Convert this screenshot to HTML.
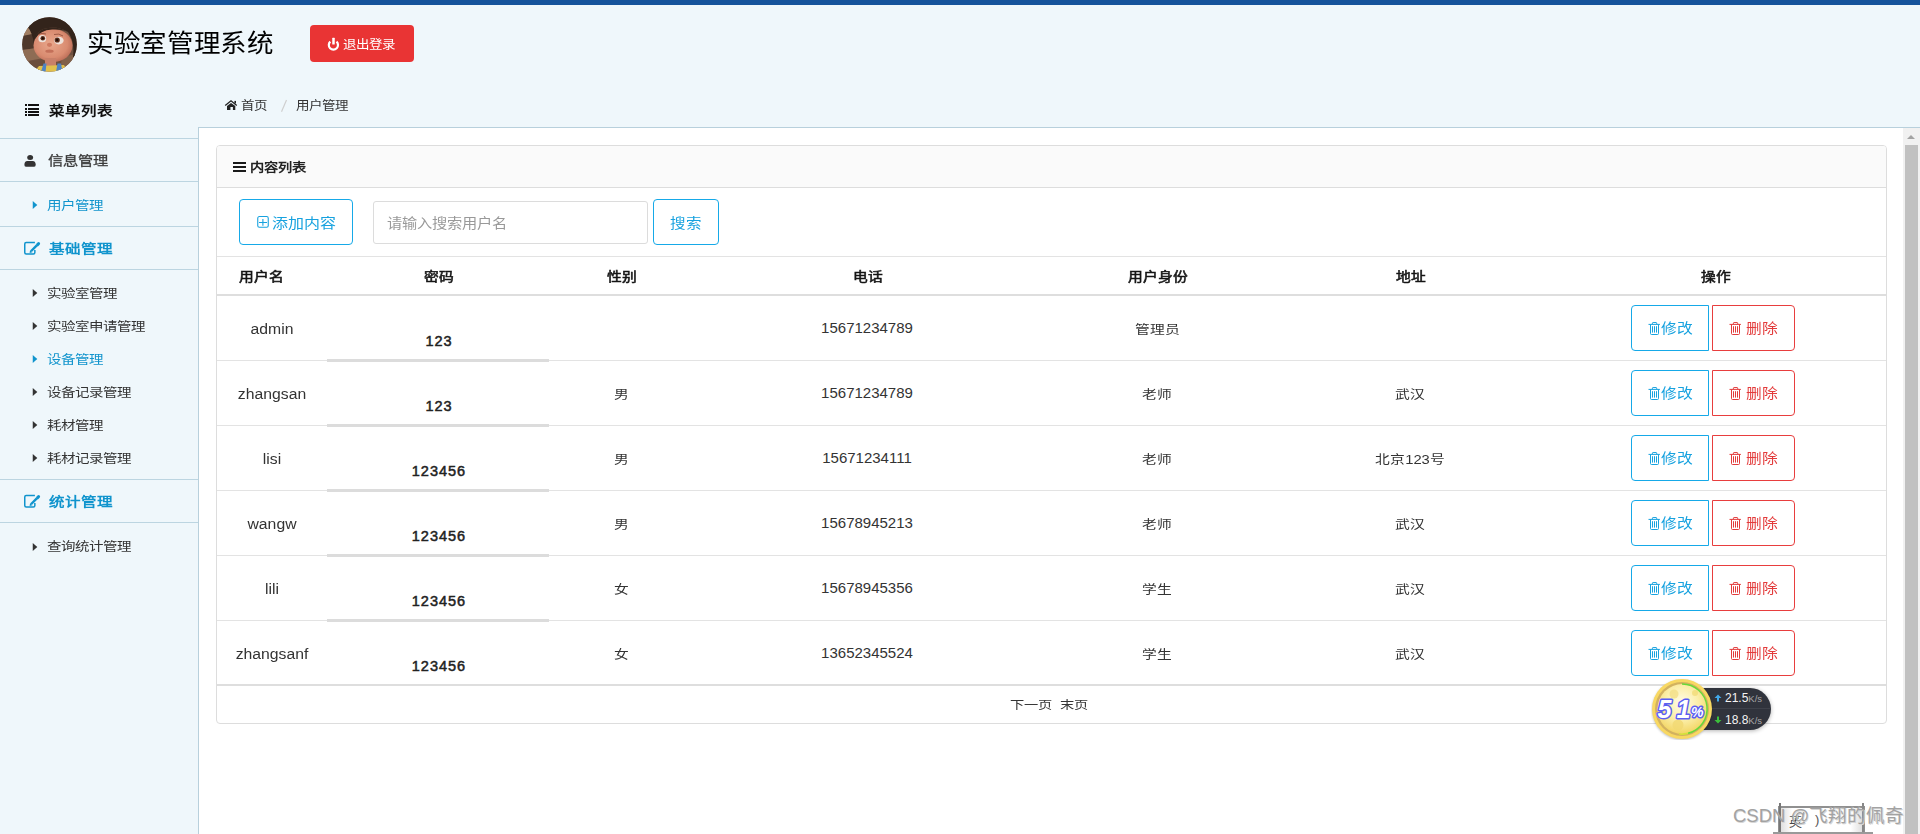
<!DOCTYPE html>
<html lang="zh-CN">
<head>
<meta charset="utf-8">
<style>
*{margin:0;padding:0;box-sizing:border-box;}
html,body{width:1920px;height:834px;overflow:hidden;}
body{background:#eff7fb;font-family:"Liberation Sans",sans-serif;color:#333;position:relative;}
.abs{position:absolute;}
.tx{line-height:1.25;white-space:nowrap;}
.b{font-weight:bold;}
.m{font-weight:normal;-webkit-text-stroke:0.25px currentColor;}
.sep{left:0;width:198px;height:1px;background:#bcd5e1;}

.hline{left:217px;width:1669px;height:1px;background:#e3e3e3;}
.pwbar{left:327px;width:222px;height:3px;background:#dcdcdc;}
.cell{text-align:center;}
</style>
</head>
<body>
<div class="abs" style="left:0;top:0;width:1920px;height:5px;background:#15539b"></div>
<svg class="abs" style="left:22px;top:17px" width="55" height="55" viewBox="0 0 55 55">
<defs><clipPath id="avc"><circle cx="27.5" cy="27.5" r="27.3"/></clipPath>
<radialGradient id="face" cx="45%" cy="45%" r="60%"><stop offset="0" stop-color="#e9a88c"/><stop offset="0.7" stop-color="#d98b70"/><stop offset="1" stop-color="#b86a55"/></radialGradient></defs>
<g clip-path="url(#avc)">
<rect width="55" height="55" fill="#6e5040"/>
<path d="M0 11 L16 9 L15 16 L0 20Z" fill="#a07e62"/>
<path d="M0 19 L16 16 L15 31 L0 33Z" fill="#4e382b"/>
<path d="M0 33 L15 31 L22 41 L0 45Z" fill="#8e6c54"/>
<path d="M0 45 L24 43 L22 55 L0 55Z" fill="#6c4e3c"/>
<path d="M40 40 L55 37 L55 55 L38 55Z" fill="#80604a"/>
<path d="M5 9 Q14 -2 30 -1 Q52 0 56 22 L56 40 L51 40 Q53 25 46 15 Q36 9 26 11 Q15 12 13 22 L12 28 Q11 16 5 9Z" fill="#33241b"/>
<ellipse cx="31" cy="28.5" rx="19.5" ry="16.5" fill="url(#face)"/>
<path d="M13 22 Q15 12 26 11 Q36 9 46 15 Q42 12 30 12.5 Q18 13 13 22Z" fill="#33241b"/>
<rect x="23" y="41" width="11" height="10" fill="#c98069"/>
<path d="M12 55 L17 49 L42 48 L46 55Z" fill="#e2c04c"/>
<path d="M19 55 L21.5 46.5 L24.5 46.5 L23.5 55Z" fill="#4f84c4"/>
<path d="M34 55 L35.5 46.5 L39 46.5 L40.5 55Z" fill="#4f84c4"/>
<ellipse cx="20.3" cy="21.7" rx="3.9" ry="3.6" fill="#eee3dc"/>
<circle cx="20.8" cy="21.3" r="2.3" fill="#5a2c1a"/>
<circle cx="20.8" cy="21.3" r="1.1" fill="#1a0c06"/>
<ellipse cx="36.8" cy="23.6" rx="4.8" ry="3.9" fill="#eee3dc"/>
<circle cx="35.2" cy="23" r="2.6" fill="#5a2c1a"/>
<circle cx="35.2" cy="23" r="1.2" fill="#1a0c06"/>
<path d="M16 17.5 Q20 15.5 24 17" fill="none" stroke="#8a4a38" stroke-width="0.8"/>
<path d="M32 17.5 Q37 16 41 19" fill="none" stroke="#8a4a38" stroke-width="0.8"/>
<ellipse cx="27.5" cy="27.8" rx="2.6" ry="2.1" fill="#cf7a60"/>
<ellipse cx="27.5" cy="34.2" rx="4.2" ry="1.6" fill="#c47059"/>
</g></svg>
<span id="t_title" class="abs tx " style="left:87px;top:28px;font-size:26.5px;transform:scaleY(0.94);transform-origin:0 0;letter-spacing:0.7px;color:#000">实验室管理系统</span>
<div class="abs" style="left:310px;top:25px;width:104px;height:37px;background:#e93434;border-radius:4px"></div>
<svg class="abs" style="left:323px;top:35px" width="20" height="18" viewBox="0 0 20 18"><path d="M7.3 6.6 A4.6 4.6 0 1 0 13.5 6.6" fill="none" stroke="#fff" stroke-width="2.2"/><rect x="9.25" y="2.8" width="2.5" height="6.7" rx="0.5" fill="#fff"/></svg>
<span id="t_logout" class="abs tx " style="left:343px;top:38px;font-size:13.5px;transform:scaleY(0.91);transform-origin:0 0;color:#fff">退出登录</span>
<svg class="abs" style="left:20px;top:100px" width="24" height="20" viewBox="0 0 24 20" shape-rendering="crispEdges"><g fill="#111"><rect x="4.5" y="4" width="2" height="2"/><rect x="8" y="4" width="11" height="2"/><rect x="4.5" y="8" width="2" height="2"/><rect x="8" y="8" width="11" height="2"/><rect x="4.5" y="11" width="2" height="2"/><rect x="8" y="11" width="11" height="2"/><rect x="4.5" y="14" width="2" height="2"/><rect x="8" y="14" width="11" height="2"/></g></svg>
<span id="t_menu" class="abs tx b" style="left:49px;top:102px;font-size:15.5px;transform:scaleY(0.84);transform-origin:0 0;color:#111">菜单列表</span>
<div class="abs sep" style="top:138px"></div>
<div class="abs sep" style="top:181px"></div>
<div class="abs sep" style="top:226px"></div>
<div class="abs sep" style="top:269px"></div>
<div class="abs sep" style="top:479px"></div>
<div class="abs sep" style="top:522px"></div>
<svg class="abs" style="left:20px;top:150px" width="20" height="20" viewBox="0 0 20 20"><g fill="#333"><ellipse cx="10.15" cy="7.6" rx="2.95" ry="2.5"/><path d="M4.4 14.8 Q4.4 11 7.4 11 H12.7 Q15.7 11 15.7 14.8 Q15.7 16.8 14.2 16.8 H5.9 Q4.4 16.8 4.4 14.8Z"/></g></svg>
<span id="t_g1" class="abs tx m" style="left:48px;top:152px;font-size:15.25px;transform:scaleY(0.84);transform-origin:0 0;color:#3c3c3c;-webkit-text-stroke:0.35px #3c3c3c">信息管理</span>
<svg class="abs" style="left:30px;top:199px" width="10" height="12" viewBox="0 0 10 12"><path d="M2.75 2 L7.3 6 L2.75 10Z" fill="#1094cd"/></svg>
<span id="t_iu" class="abs tx " style="left:47px;top:198px;font-size:14.5px;transform:scaleY(0.85);transform-origin:0 0;color:#1094cd">用户管理</span>
<svg class="abs" style="left:20px;top:238px" width="22" height="20" viewBox="0 0 22 20"><path d="M14.9 4.6 H6.2 Q4.75 4.6 4.75 6.05 V14.55 Q4.75 16 6.2 16 H13.4 Q14.85 16 14.85 14.55 V12" fill="none" stroke="#1094cd" stroke-width="1.5"/><path d="M11.2 13 L16.8 7.4" stroke="#1094cd" stroke-width="2.4"/><path d="M9.6 14.9 L10.1 11.9 L12.5 14.3Z" fill="#1094cd"/><path d="M17.6 6.6 L18.6 5.6" stroke="#1094cd" stroke-width="3" stroke-linecap="round"/></svg>
<span id="t_g2" class="abs tx b" style="left:49px;top:240px;font-size:15.5px;transform:scaleY(0.84);transform-origin:0 0;color:#1094cd">基础管理</span>
<svg class="abs" style="left:30px;top:287px" width="10" height="12" viewBox="0 0 10 12"><path d="M2.75 2 L7.3 6 L2.75 10Z" fill="#333"/></svg>
<span id="t_i1" class="abs tx " style="left:47px;top:286px;font-size:14.5px;transform:scaleY(0.85);transform-origin:0 0;color:#333">实验室管理</span>
<svg class="abs" style="left:30px;top:320px" width="10" height="12" viewBox="0 0 10 12"><path d="M2.75 2 L7.3 6 L2.75 10Z" fill="#333"/></svg>
<span id="t_i2" class="abs tx " style="left:47px;top:319px;font-size:14.5px;transform:scaleY(0.85);transform-origin:0 0;color:#333">实验室申请管理</span>
<svg class="abs" style="left:30px;top:353px" width="10" height="12" viewBox="0 0 10 12"><path d="M2.75 2 L7.3 6 L2.75 10Z" fill="#1094cd"/></svg>
<span id="t_i3" class="abs tx " style="left:47px;top:352px;font-size:14.5px;transform:scaleY(0.85);transform-origin:0 0;color:#1094cd">设备管理</span>
<svg class="abs" style="left:30px;top:386px" width="10" height="12" viewBox="0 0 10 12"><path d="M2.75 2 L7.3 6 L2.75 10Z" fill="#333"/></svg>
<span id="t_i4" class="abs tx " style="left:47px;top:385px;font-size:14.5px;transform:scaleY(0.85);transform-origin:0 0;color:#333">设备记录管理</span>
<svg class="abs" style="left:30px;top:419px" width="10" height="12" viewBox="0 0 10 12"><path d="M2.75 2 L7.3 6 L2.75 10Z" fill="#333"/></svg>
<span id="t_i5" class="abs tx " style="left:47px;top:418px;font-size:14.5px;transform:scaleY(0.85);transform-origin:0 0;color:#333">耗材管理</span>
<svg class="abs" style="left:30px;top:452px" width="10" height="12" viewBox="0 0 10 12"><path d="M2.75 2 L7.3 6 L2.75 10Z" fill="#333"/></svg>
<span id="t_i6" class="abs tx " style="left:47px;top:451px;font-size:14.5px;transform:scaleY(0.85);transform-origin:0 0;color:#333">耗材记录管理</span>
<svg class="abs" style="left:20px;top:491px" width="22" height="20" viewBox="0 0 22 20"><path d="M14.9 4.6 H6.2 Q4.75 4.6 4.75 6.05 V14.55 Q4.75 16 6.2 16 H13.4 Q14.85 16 14.85 14.55 V12" fill="none" stroke="#1094cd" stroke-width="1.5"/><path d="M11.2 13 L16.8 7.4" stroke="#1094cd" stroke-width="2.4"/><path d="M9.6 14.9 L10.1 11.9 L12.5 14.3Z" fill="#1094cd"/><path d="M17.6 6.6 L18.6 5.6" stroke="#1094cd" stroke-width="3" stroke-linecap="round"/></svg>
<span id="t_g3" class="abs tx b" style="left:49px;top:493px;font-size:15.5px;transform:scaleY(0.84);transform-origin:0 0;color:#1094cd">统计管理</span>
<svg class="abs" style="left:30px;top:540.5px" width="10" height="12" viewBox="0 0 10 12"><path d="M2.75 2 L7.3 6 L2.75 10Z" fill="#333"/></svg>
<span id="t_i7" class="abs tx " style="left:47px;top:539px;font-size:14.5px;transform:scaleY(0.85);transform-origin:0 0;color:#333">查询统计管理</span>
<svg class="abs" style="left:223px;top:97px" width="17" height="16" viewBox="0 0 17 16"><path d="M2.2 8.5 L8 3.7 L13.8 8.5" fill="none" stroke="#222" stroke-width="1.25"/><rect x="11.4" y="3.9" width="1.6" height="2.6" fill="#222"/><path d="M4 9 L8 5.9 L12.3 9 V13 H9.9 V10.1 H7.4 V13 H4Z" fill="#222"/></svg>
<span id="t_c1" class="abs tx " style="left:241px;top:99px;font-size:13.5px;transform:scaleY(0.9);transform-origin:0 0;color:#333">首页</span>
<svg class="abs" style="left:280px;top:99px" width="8" height="14" viewBox="0 0 8 14"><path d="M6.5 1 L1.5 12.8" stroke="#cfcfcf" stroke-width="1.2"/></svg>
<span id="t_c2" class="abs tx " style="left:296px;top:99px;font-size:13.5px;transform:scaleY(0.9);transform-origin:0 0;color:#333">用户管理</span>
<div class="abs" style="left:198px;top:127px;width:1722px;height:707px;background:#fff;border-top:1px solid #b8d0dc;border-left:1px solid #b8d0dc;"></div>
<div class="abs" style="left:216px;top:145px;width:1671px;height:579px;border:1px solid #ddd;border-radius:4px;background:#fff;"></div>
<div class="abs" style="left:217px;top:146px;width:1669px;height:42px;background:#fafafa;border-bottom:1px solid #ddd;border-radius:3px 3px 0 0;"></div>
<svg class="abs" style="left:233px;top:162px" width="13" height="10" viewBox="0 0 13 10" shape-rendering="crispEdges"><g fill="#1a1a1a"><rect x="0" y="0" width="13" height="2"/><rect x="0" y="4" width="13" height="2"/><rect x="0" y="8" width="13" height="2"/></g></svg>
<span id="t_ptitle" class="abs tx b" style="left:250px;top:161px;font-size:14.25px;transform:scaleY(0.87);transform-origin:0 0;color:#222">内容列表</span>
<div class="abs" style="left:239px;top:199px;width:114px;height:46px;border:1px solid #16a9e8;border-radius:4px"></div>
<svg class="abs" style="left:254px;top:213px" width="18" height="19" viewBox="0 0 18 19"><rect x="3.75" y="3.55" width="10.5" height="10.7" rx="1.6" fill="none" stroke="#17a2df" stroke-width="1.1"/><path d="M8.9 6 V12.8 M5 9.45 H13" stroke="#17a2df" stroke-width="1.1"/></svg>
<span id="t_add" class="abs tx " style="left:272px;top:216px;font-size:16.0px;transform:scaleY(0.83);transform-origin:0 0;color:#17a2df">添加内容</span>
<div class="abs" style="left:373px;top:201px;width:275px;height:43px;border:1px solid #dcdcdc;border-radius:3px"></div>
<span id="t_ph" class="abs tx " style="left:387px;top:215px;font-size:15.25px;transform:scaleY(0.87);transform-origin:0 0;color:#999">请输入搜索用户名</span>
<div class="abs" style="left:653px;top:199px;width:66px;height:46px;border:1px solid #16a9e8;border-radius:4px"></div>
<span id="t_search" class="abs tx " style="left:670px;top:215px;font-size:15.5px;transform:scaleY(0.87);transform-origin:0 0;color:#17a2df">搜索</span>
<div class="abs hline" style="top:256px"></div>
<span class="abs tx cell"  style="left:217.5px;width:88px;top:269px;font-size:14.75px;transform:scaleY(0.87);transform-origin:0 0;color:#151515;-webkit-text-stroke:0.6px #151515">用户名</span>
<span class="abs tx cell"  style="left:327.5px;width:222px;top:269px;font-size:14.75px;transform:scaleY(0.87);transform-origin:0 0;color:#151515;-webkit-text-stroke:0.6px #151515">密码</span>
<span class="abs tx cell"  style="left:549.5px;width:144px;top:269px;font-size:14.75px;transform:scaleY(0.87);transform-origin:0 0;color:#151515;-webkit-text-stroke:0.6px #151515">性别</span>
<span class="abs tx cell" id="th_tel" style="left:693.5px;width:348px;top:269px;font-size:14.75px;transform:scaleY(0.87);transform-origin:0 0;color:#151515;-webkit-text-stroke:0.6px #151515">电话</span>
<span class="abs tx cell"  style="left:1041.5px;width:232px;top:269px;font-size:14.75px;transform:scaleY(0.87);transform-origin:0 0;color:#151515;-webkit-text-stroke:0.6px #151515">用户身份</span>
<span class="abs tx cell"  style="left:1273.5px;width:274px;top:269px;font-size:14.75px;transform:scaleY(0.87);transform-origin:0 0;color:#151515;-webkit-text-stroke:0.6px #151515">地址</span>
<span class="abs tx cell"  style="left:1547.5px;width:336px;top:269px;font-size:14.75px;transform:scaleY(0.87);transform-origin:0 0;color:#151515;-webkit-text-stroke:0.6px #151515">操作</span>
<div class="abs hline" style="top:294px;height:2px;background:#dedede"></div>
<span id="td_user" class="abs tx cell" style="left:217px;width:110px;top:319px;font-size:15.75px;transform:scaleY(0.97);transform-origin:0 0;">admin</span>
<span id="td_pw" class="abs tx cell" style="left:328px;width:222px;top:332px;font-size:14.5px;color:#222;letter-spacing:1px;-webkit-text-stroke:0.5px #222">123</span>
<span class="abs tx cell" style="left:549px;width:144px;top:323px;font-size:14.75px;transform:scaleY(0.82);transform-origin:0 0;"></span>
<span id="td_num" class="abs tx cell" style="left:693px;width:348px;top:319px;font-size:15.0px;">15671234789</span>
<span id="td_cjk" class="abs tx cell" style="left:1041px;width:232px;top:323px;font-size:14.75px;transform:scaleY(0.82);transform-origin:0 0;">管理员</span>
<span class="abs tx cell" style="left:1273px;width:274px;top:323px;font-size:14.75px;transform:scaleY(0.82);transform-origin:0 0;"></span>
<div class="abs" style="left:1631px;top:305px;width:78px;height:46px;border:1px solid #16a9e8;border-radius:4px 0 0 4px"></div>
<div class="abs" style="left:1712px;top:305px;width:83px;height:46px;border:1px solid #e83e3e;border-radius:0 4px 4px 0"></div>
<svg class="abs" style="left:1646px;top:320px" width="16" height="17" viewBox="0 0 16 17"><g fill="none" stroke="#17a2df" stroke-width="1"><path d="M6.4 4.4 V3.2 Q6.4 2.55 7.05 2.55 H10.05 Q10.7 2.55 10.7 3.2 V4.4"/><path d="M2.5 4.4 H13.9"/><path d="M4.5 4.4 V13.5 Q4.5 14.5 5.5 14.5 H11.5 Q12.5 14.5 12.5 13.5 V4.4"/><path d="M6.5 6.6 V12.2 M8.5 6.6 V12.2 M10.5 6.6 V12.2" stroke-linecap="round"/></g></svg>
<svg class="abs" style="left:1727px;top:320px" width="16" height="17" viewBox="0 0 16 17"><g fill="none" stroke="#e33b3b" stroke-width="1"><path d="M6.4 4.4 V3.2 Q6.4 2.55 7.05 2.55 H10.05 Q10.7 2.55 10.7 3.2 V4.4"/><path d="M2.5 4.4 H13.9"/><path d="M4.5 4.4 V13.5 Q4.5 14.5 5.5 14.5 H11.5 Q12.5 14.5 12.5 13.5 V4.4"/><path d="M6.5 6.6 V12.2 M8.5 6.6 V12.2 M10.5 6.6 V12.2" stroke-linecap="round"/></g></svg>
<span id="t_mod" class="abs tx" style="left:1661px;top:320px;font-size:15.75px;transform:scaleY(0.87);transform-origin:0 0;color:#17a2df">修改</span>
<span id="t_del" class="abs tx" style="left:1746px;top:320px;font-size:15.75px;transform:scaleY(0.87);transform-origin:0 0;color:#e33b3b">删除</span>
<div class="abs hline" style="top:360px"></div>
<div class="abs pwbar" style="top:359px"></div>
<span  class="abs tx cell" style="left:217px;width:110px;top:384px;font-size:15.75px;transform:scaleY(0.97);transform-origin:0 0;">zhangsan</span>
<span  class="abs tx cell" style="left:328px;width:222px;top:397px;font-size:14.5px;color:#222;letter-spacing:1px;-webkit-text-stroke:0.5px #222">123</span>
<span class="abs tx cell" style="left:549px;width:144px;top:388px;font-size:14.75px;transform:scaleY(0.82);transform-origin:0 0;">男</span>
<span  class="abs tx cell" style="left:693px;width:348px;top:384px;font-size:15.0px;">15671234789</span>
<span  class="abs tx cell" style="left:1041px;width:232px;top:388px;font-size:14.75px;transform:scaleY(0.82);transform-origin:0 0;">老师</span>
<span class="abs tx cell" style="left:1273px;width:274px;top:388px;font-size:14.75px;transform:scaleY(0.82);transform-origin:0 0;">武汉</span>
<div class="abs" style="left:1631px;top:370px;width:78px;height:46px;border:1px solid #16a9e8;border-radius:4px 0 0 4px"></div>
<div class="abs" style="left:1712px;top:370px;width:83px;height:46px;border:1px solid #e83e3e;border-radius:0 4px 4px 0"></div>
<svg class="abs" style="left:1646px;top:385px" width="16" height="17" viewBox="0 0 16 17"><g fill="none" stroke="#17a2df" stroke-width="1"><path d="M6.4 4.4 V3.2 Q6.4 2.55 7.05 2.55 H10.05 Q10.7 2.55 10.7 3.2 V4.4"/><path d="M2.5 4.4 H13.9"/><path d="M4.5 4.4 V13.5 Q4.5 14.5 5.5 14.5 H11.5 Q12.5 14.5 12.5 13.5 V4.4"/><path d="M6.5 6.6 V12.2 M8.5 6.6 V12.2 M10.5 6.6 V12.2" stroke-linecap="round"/></g></svg>
<svg class="abs" style="left:1727px;top:385px" width="16" height="17" viewBox="0 0 16 17"><g fill="none" stroke="#e33b3b" stroke-width="1"><path d="M6.4 4.4 V3.2 Q6.4 2.55 7.05 2.55 H10.05 Q10.7 2.55 10.7 3.2 V4.4"/><path d="M2.5 4.4 H13.9"/><path d="M4.5 4.4 V13.5 Q4.5 14.5 5.5 14.5 H11.5 Q12.5 14.5 12.5 13.5 V4.4"/><path d="M6.5 6.6 V12.2 M8.5 6.6 V12.2 M10.5 6.6 V12.2" stroke-linecap="round"/></g></svg>
<span  class="abs tx" style="left:1661px;top:385px;font-size:15.75px;transform:scaleY(0.87);transform-origin:0 0;color:#17a2df">修改</span>
<span  class="abs tx" style="left:1746px;top:385px;font-size:15.75px;transform:scaleY(0.87);transform-origin:0 0;color:#e33b3b">删除</span>
<div class="abs hline" style="top:425px"></div>
<div class="abs pwbar" style="top:424px"></div>
<span  class="abs tx cell" style="left:217px;width:110px;top:449px;font-size:15.75px;transform:scaleY(0.97);transform-origin:0 0;">lisi</span>
<span  class="abs tx cell" style="left:328px;width:222px;top:462px;font-size:14.5px;color:#222;letter-spacing:1px;-webkit-text-stroke:0.5px #222">123456</span>
<span class="abs tx cell" style="left:549px;width:144px;top:453px;font-size:14.75px;transform:scaleY(0.82);transform-origin:0 0;">男</span>
<span  class="abs tx cell" style="left:693px;width:348px;top:449px;font-size:15.0px;">15671234111</span>
<span  class="abs tx cell" style="left:1041px;width:232px;top:453px;font-size:14.75px;transform:scaleY(0.82);transform-origin:0 0;">老师</span>
<span class="abs tx cell" style="left:1273px;width:274px;top:453px;font-size:14.75px;transform:scaleY(0.82);transform-origin:0 0;">北京123号</span>
<div class="abs" style="left:1631px;top:435px;width:78px;height:46px;border:1px solid #16a9e8;border-radius:4px 0 0 4px"></div>
<div class="abs" style="left:1712px;top:435px;width:83px;height:46px;border:1px solid #e83e3e;border-radius:0 4px 4px 0"></div>
<svg class="abs" style="left:1646px;top:450px" width="16" height="17" viewBox="0 0 16 17"><g fill="none" stroke="#17a2df" stroke-width="1"><path d="M6.4 4.4 V3.2 Q6.4 2.55 7.05 2.55 H10.05 Q10.7 2.55 10.7 3.2 V4.4"/><path d="M2.5 4.4 H13.9"/><path d="M4.5 4.4 V13.5 Q4.5 14.5 5.5 14.5 H11.5 Q12.5 14.5 12.5 13.5 V4.4"/><path d="M6.5 6.6 V12.2 M8.5 6.6 V12.2 M10.5 6.6 V12.2" stroke-linecap="round"/></g></svg>
<svg class="abs" style="left:1727px;top:450px" width="16" height="17" viewBox="0 0 16 17"><g fill="none" stroke="#e33b3b" stroke-width="1"><path d="M6.4 4.4 V3.2 Q6.4 2.55 7.05 2.55 H10.05 Q10.7 2.55 10.7 3.2 V4.4"/><path d="M2.5 4.4 H13.9"/><path d="M4.5 4.4 V13.5 Q4.5 14.5 5.5 14.5 H11.5 Q12.5 14.5 12.5 13.5 V4.4"/><path d="M6.5 6.6 V12.2 M8.5 6.6 V12.2 M10.5 6.6 V12.2" stroke-linecap="round"/></g></svg>
<span  class="abs tx" style="left:1661px;top:450px;font-size:15.75px;transform:scaleY(0.87);transform-origin:0 0;color:#17a2df">修改</span>
<span  class="abs tx" style="left:1746px;top:450px;font-size:15.75px;transform:scaleY(0.87);transform-origin:0 0;color:#e33b3b">删除</span>
<div class="abs hline" style="top:490px"></div>
<div class="abs pwbar" style="top:489px"></div>
<span  class="abs tx cell" style="left:217px;width:110px;top:514px;font-size:15.75px;transform:scaleY(0.97);transform-origin:0 0;">wangw</span>
<span  class="abs tx cell" style="left:328px;width:222px;top:527px;font-size:14.5px;color:#222;letter-spacing:1px;-webkit-text-stroke:0.5px #222">123456</span>
<span class="abs tx cell" style="left:549px;width:144px;top:518px;font-size:14.75px;transform:scaleY(0.82);transform-origin:0 0;">男</span>
<span  class="abs tx cell" style="left:693px;width:348px;top:514px;font-size:15.0px;">15678945213</span>
<span  class="abs tx cell" style="left:1041px;width:232px;top:518px;font-size:14.75px;transform:scaleY(0.82);transform-origin:0 0;">老师</span>
<span class="abs tx cell" style="left:1273px;width:274px;top:518px;font-size:14.75px;transform:scaleY(0.82);transform-origin:0 0;">武汉</span>
<div class="abs" style="left:1631px;top:500px;width:78px;height:46px;border:1px solid #16a9e8;border-radius:4px 0 0 4px"></div>
<div class="abs" style="left:1712px;top:500px;width:83px;height:46px;border:1px solid #e83e3e;border-radius:0 4px 4px 0"></div>
<svg class="abs" style="left:1646px;top:515px" width="16" height="17" viewBox="0 0 16 17"><g fill="none" stroke="#17a2df" stroke-width="1"><path d="M6.4 4.4 V3.2 Q6.4 2.55 7.05 2.55 H10.05 Q10.7 2.55 10.7 3.2 V4.4"/><path d="M2.5 4.4 H13.9"/><path d="M4.5 4.4 V13.5 Q4.5 14.5 5.5 14.5 H11.5 Q12.5 14.5 12.5 13.5 V4.4"/><path d="M6.5 6.6 V12.2 M8.5 6.6 V12.2 M10.5 6.6 V12.2" stroke-linecap="round"/></g></svg>
<svg class="abs" style="left:1727px;top:515px" width="16" height="17" viewBox="0 0 16 17"><g fill="none" stroke="#e33b3b" stroke-width="1"><path d="M6.4 4.4 V3.2 Q6.4 2.55 7.05 2.55 H10.05 Q10.7 2.55 10.7 3.2 V4.4"/><path d="M2.5 4.4 H13.9"/><path d="M4.5 4.4 V13.5 Q4.5 14.5 5.5 14.5 H11.5 Q12.5 14.5 12.5 13.5 V4.4"/><path d="M6.5 6.6 V12.2 M8.5 6.6 V12.2 M10.5 6.6 V12.2" stroke-linecap="round"/></g></svg>
<span  class="abs tx" style="left:1661px;top:515px;font-size:15.75px;transform:scaleY(0.87);transform-origin:0 0;color:#17a2df">修改</span>
<span  class="abs tx" style="left:1746px;top:515px;font-size:15.75px;transform:scaleY(0.87);transform-origin:0 0;color:#e33b3b">删除</span>
<div class="abs hline" style="top:555px"></div>
<div class="abs pwbar" style="top:554px"></div>
<span  class="abs tx cell" style="left:217px;width:110px;top:579px;font-size:15.75px;transform:scaleY(0.97);transform-origin:0 0;">lili</span>
<span  class="abs tx cell" style="left:328px;width:222px;top:592px;font-size:14.5px;color:#222;letter-spacing:1px;-webkit-text-stroke:0.5px #222">123456</span>
<span class="abs tx cell" style="left:549px;width:144px;top:583px;font-size:14.75px;transform:scaleY(0.82);transform-origin:0 0;">女</span>
<span  class="abs tx cell" style="left:693px;width:348px;top:579px;font-size:15.0px;">15678945356</span>
<span  class="abs tx cell" style="left:1041px;width:232px;top:583px;font-size:14.75px;transform:scaleY(0.82);transform-origin:0 0;">学生</span>
<span class="abs tx cell" style="left:1273px;width:274px;top:583px;font-size:14.75px;transform:scaleY(0.82);transform-origin:0 0;">武汉</span>
<div class="abs" style="left:1631px;top:565px;width:78px;height:46px;border:1px solid #16a9e8;border-radius:4px 0 0 4px"></div>
<div class="abs" style="left:1712px;top:565px;width:83px;height:46px;border:1px solid #e83e3e;border-radius:0 4px 4px 0"></div>
<svg class="abs" style="left:1646px;top:580px" width="16" height="17" viewBox="0 0 16 17"><g fill="none" stroke="#17a2df" stroke-width="1"><path d="M6.4 4.4 V3.2 Q6.4 2.55 7.05 2.55 H10.05 Q10.7 2.55 10.7 3.2 V4.4"/><path d="M2.5 4.4 H13.9"/><path d="M4.5 4.4 V13.5 Q4.5 14.5 5.5 14.5 H11.5 Q12.5 14.5 12.5 13.5 V4.4"/><path d="M6.5 6.6 V12.2 M8.5 6.6 V12.2 M10.5 6.6 V12.2" stroke-linecap="round"/></g></svg>
<svg class="abs" style="left:1727px;top:580px" width="16" height="17" viewBox="0 0 16 17"><g fill="none" stroke="#e33b3b" stroke-width="1"><path d="M6.4 4.4 V3.2 Q6.4 2.55 7.05 2.55 H10.05 Q10.7 2.55 10.7 3.2 V4.4"/><path d="M2.5 4.4 H13.9"/><path d="M4.5 4.4 V13.5 Q4.5 14.5 5.5 14.5 H11.5 Q12.5 14.5 12.5 13.5 V4.4"/><path d="M6.5 6.6 V12.2 M8.5 6.6 V12.2 M10.5 6.6 V12.2" stroke-linecap="round"/></g></svg>
<span  class="abs tx" style="left:1661px;top:580px;font-size:15.75px;transform:scaleY(0.87);transform-origin:0 0;color:#17a2df">修改</span>
<span  class="abs tx" style="left:1746px;top:580px;font-size:15.75px;transform:scaleY(0.87);transform-origin:0 0;color:#e33b3b">删除</span>
<div class="abs hline" style="top:620px"></div>
<div class="abs pwbar" style="top:619px"></div>
<span  class="abs tx cell" style="left:217px;width:110px;top:644px;font-size:15.75px;transform:scaleY(0.97);transform-origin:0 0;">zhangsanf</span>
<span  class="abs tx cell" style="left:328px;width:222px;top:657px;font-size:14.5px;color:#222;letter-spacing:1px;-webkit-text-stroke:0.5px #222">123456</span>
<span class="abs tx cell" style="left:549px;width:144px;top:648px;font-size:14.75px;transform:scaleY(0.82);transform-origin:0 0;">女</span>
<span  class="abs tx cell" style="left:693px;width:348px;top:644px;font-size:15.0px;">13652345524</span>
<span  class="abs tx cell" style="left:1041px;width:232px;top:648px;font-size:14.75px;transform:scaleY(0.82);transform-origin:0 0;">学生</span>
<span class="abs tx cell" style="left:1273px;width:274px;top:648px;font-size:14.75px;transform:scaleY(0.82);transform-origin:0 0;">武汉</span>
<div class="abs" style="left:1631px;top:630px;width:78px;height:46px;border:1px solid #16a9e8;border-radius:4px 0 0 4px"></div>
<div class="abs" style="left:1712px;top:630px;width:83px;height:46px;border:1px solid #e83e3e;border-radius:0 4px 4px 0"></div>
<svg class="abs" style="left:1646px;top:645px" width="16" height="17" viewBox="0 0 16 17"><g fill="none" stroke="#17a2df" stroke-width="1"><path d="M6.4 4.4 V3.2 Q6.4 2.55 7.05 2.55 H10.05 Q10.7 2.55 10.7 3.2 V4.4"/><path d="M2.5 4.4 H13.9"/><path d="M4.5 4.4 V13.5 Q4.5 14.5 5.5 14.5 H11.5 Q12.5 14.5 12.5 13.5 V4.4"/><path d="M6.5 6.6 V12.2 M8.5 6.6 V12.2 M10.5 6.6 V12.2" stroke-linecap="round"/></g></svg>
<svg class="abs" style="left:1727px;top:645px" width="16" height="17" viewBox="0 0 16 17"><g fill="none" stroke="#e33b3b" stroke-width="1"><path d="M6.4 4.4 V3.2 Q6.4 2.55 7.05 2.55 H10.05 Q10.7 2.55 10.7 3.2 V4.4"/><path d="M2.5 4.4 H13.9"/><path d="M4.5 4.4 V13.5 Q4.5 14.5 5.5 14.5 H11.5 Q12.5 14.5 12.5 13.5 V4.4"/><path d="M6.5 6.6 V12.2 M8.5 6.6 V12.2 M10.5 6.6 V12.2" stroke-linecap="round"/></g></svg>
<span  class="abs tx" style="left:1661px;top:645px;font-size:15.75px;transform:scaleY(0.87);transform-origin:0 0;color:#17a2df">修改</span>
<span  class="abs tx" style="left:1746px;top:645px;font-size:15.75px;transform:scaleY(0.87);transform-origin:0 0;color:#e33b3b">删除</span>
<div class="abs hline" style="top:684px;height:2px;background:#dedede"></div>
<span id="t_pager" class="abs tx " style="left:1010px;top:698px;font-size:14.25px;transform:scaleY(0.82);transform-origin:0 0;color:#333">下一页&nbsp;&nbsp;末页</span>
<div class="abs" style="left:1903px;top:128px;width:17px;height:706px;background:#f1f1f1"></div>
<div class="abs" style="left:1907px;top:135px;width:0;height:0;border-left:4px solid transparent;border-right:4px solid transparent;border-bottom:4px solid #a3a3a3"></div>
<div class="abs" style="left:1905px;top:145px;width:13px;height:689px;background:#c1c1c1"></div>
<div class="abs" style="left:1703px;top:688px;width:68px;height:42px;background:#30333c;border-radius:0 21px 21px 0;box-shadow:0 1px 4px rgba(0,0,0,.3)"></div>
<div class="abs" style="left:1712px;top:708px;width:58px;height:1px;background:#3e414a"></div>
<svg class="abs" style="left:1651px;top:678px" width="62" height="62" viewBox="0 0 62 62">
<defs><radialGradient id="gg" cx="48%" cy="38%" r="62%"><stop offset="0" stop-color="#fffce8"/><stop offset="0.55" stop-color="#fbeea8"/><stop offset="1" stop-color="#f3d562"/></radialGradient></defs>
<circle cx="31" cy="31" r="30" fill="#f8d862" style="filter:drop-shadow(0 1px 1px rgba(0,0,0,.25))"/>
<circle cx="31" cy="31" r="27" fill="#d2b260"/>
<circle cx="31.5" cy="31" r="25" fill="url(#gg)"/>
<circle cx="23" cy="16" r="4.5" fill="#f2de86" opacity=".8"/>
<circle cx="27" cy="47" r="5.5" fill="#f1d872" opacity=".8"/>
<circle cx="44" cy="15" r="3" fill="#f1d872" opacity=".7"/>
<path d="M31 6 A25 25 0 0 1 37 55.3" fill="none" stroke="#67d93a" stroke-width="1.5"/>
<path d="M37 55.3 A25 25 0 0 1 28 56" fill="none" stroke="#d4e23a" stroke-width="1.5"/>
<g font-family="Liberation Sans" font-style="italic" font-weight="bold" fill="#fff" stroke="#5b5ff2" stroke-width="3" paint-order="stroke" stroke-linejoin="round">
<text x="6.5" y="39.5" font-size="25">5</text>
<text x="25.5" y="39.5" font-size="25">1</text>
<text x="40" y="39" font-size="14">%</text>
</g>
</svg>
<svg class="abs" style="left:1714px;top:694px" width="8" height="8" viewBox="0 0 8 8"><path d="M4 0.5 L7.5 4 H5 V7.5 H3 V4 H0.5Z" fill="#41a8e8"/></svg>
<svg class="abs" style="left:1714px;top:716px" width="8" height="8" viewBox="0 0 8 8"><path d="M4 7.5 L7.5 4 H5 V0.5 H3 V4 H0.5Z" fill="#3bbf3b"/></svg>
<span class="abs tx" style="left:1725px;top:691px;font-size:12px;color:#f4f4f4">21.5<span style="font-size:9.5px;color:#a9a9a9">K/s</span></span>
<span class="abs tx" style="left:1725px;top:713px;font-size:12px;color:#f4f4f4">18.8<span style="font-size:9.5px;color:#a9a9a9">K/s</span></span>

<div class="abs" style="left:1778px;top:806px;width:87px;height:28px;border:2px solid #909090;border-bottom:none;background:linear-gradient(90deg,#ddd,#fff 15%,#fff 85%,#ddd)"></div>
<div class="abs" style="left:1779px;top:803px;width:2px;height:31px;background:#777"></div>
<div class="abs" style="left:1862px;top:803px;width:2px;height:31px;background:#888"></div>
<div class="abs" style="left:1773px;top:832px;width:100px;height:2px;background:#999"></div>
<span class="abs tx" style="left:1789px;top:814px;font-size:13px;color:#444">英</span>
<span class="abs tx" style="left:1815px;top:812px;font-size:13px;color:#555">)</span>

<span id="t_wm" class="abs tx " style="left:1733px;top:804px;font-size:18.5px;color:#a2a2a2;text-shadow:0.7px 0.7px 0 #d6d6d6">CSDN @飞翔的佩奇</span>
</body>
</html>
